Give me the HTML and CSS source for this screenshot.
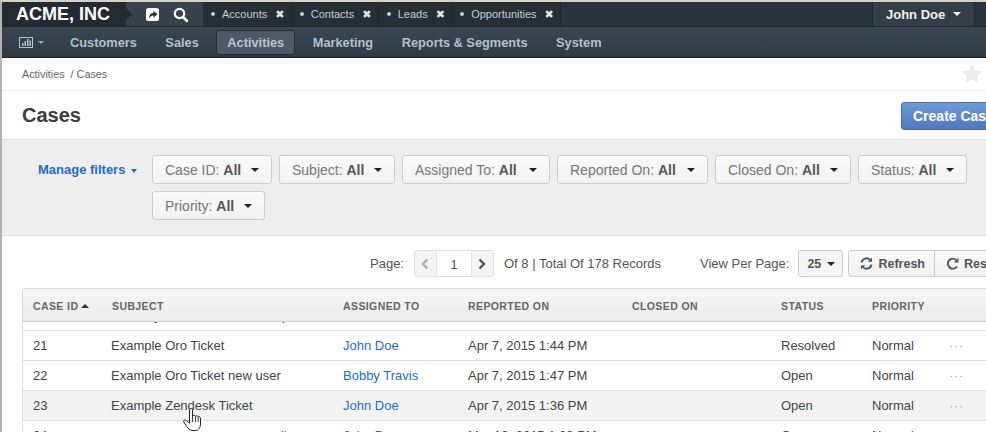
FILE: index.html
```html
<!DOCTYPE html>
<html lang="en">
<head>
<meta charset="utf-8">
<title>Cases</title>
<link rel="stylesheet" href="styles.css">
</head>
<body>
<div class="page">
  <header class="topbar">
    <div class="brand">ACME, INC</div>
    <div class="quick">
      <svg class="ico-share" width="13" height="13" viewBox="0 0 13 13"><rect x="0" y="0" width="13" height="13" rx="2.500" fill="#fff"/><path d="M3 10.500c0-4 2-5.500 4.500-5.500V2.800L11.500 6.300 7.500 9.800V7.500c-2 0-3.400 1-4.500 3z" fill="#2b343d"/></svg>
      <svg class="ico-search" width="15" height="15" viewBox="0 0 15 15"><circle cx="6.500" cy="6.500" r="4.700" fill="none" stroke="#fff" stroke-width="2.200"/><path d="M10 10l4 4" stroke="#fff" stroke-width="2.600" stroke-linecap="round"/></svg>
    </div>
    <ul class="tabs">
      <li class="tab"><span class="dot"></span>Accounts<span class="x">&#10006;</span></li>
      <li class="tab"><span class="dot"></span>Contacts<span class="x">&#10006;</span></li>
      <li class="tab"><span class="dot"></span>Leads<span class="x">&#10006;</span></li>
      <li class="tab"><span class="dot"></span>Opportunities<span class="x">&#10006;</span></li>
    </ul>
    <div class="user">John Doe<span class="caret caret-white"></span></div>
  </header>
  <nav class="mainnav">
    <div class="chart">
      <svg width="14" height="11" viewBox="0 0 14 11"><rect x=".5" y=".5" width="13" height="10" fill="none" stroke="#b5c2cc"/><path d="M3 9V6h1.500v3zM5.500 9V4H7v5zM8 9V2h1.500v7zM10.500 9V3.500H12V9z" fill="#b5c2cc"/></svg>
      <span class="caret caret-nav"></span>
    </div>
    <a class="nav-item">Customers</a>
    <a class="nav-item">Sales</a>
    <a class="nav-item active">Activities</a>
    <a class="nav-item">Marketing</a>
    <a class="nav-item">Reports &amp; Segments</a>
    <a class="nav-item">System</a>
  </nav>
  <div class="crumbs">
    <span>Activities&nbsp; / Cases</span>
    <svg class="star" width="20" height="19" viewBox="0 0 20 19"><path d="M10 0l3 6.300 7 1-5 4.900 1.200 6.800-6.200-3.300L3.800 19 5 12.200 0 7.300l7-1z" fill="#ebebeb"/></svg>
  </div>
  <div class="titlebar">
    <h1>Cases</h1>
    <button class="create">Create Case</button>
  </div>
  <section class="filters">
    <a class="manage">Manage filters<span class="caret caret-blue"></span></a>
    <div class="chips">
      <div class="chip w-id">Case ID: <b>All</b><span class="caret"></span></div>
      <div class="chip w-subject">Subject: <b>All</b><span class="caret"></span></div>
      <div class="chip w-assigned">Assigned To: <b>All</b><span class="caret"></span></div>
      <div class="chip w-reported">Reported On: <b>All</b><span class="caret"></span></div>
      <div class="chip w-closed">Closed On: <b>All</b><span class="caret"></span></div>
      <div class="chip w-status">Status: <b>All</b><span class="caret"></span></div>
      <div class="chip w-priority">Priority: <b>All</b><span class="caret"></span></div>
    </div>
  </section>
  <section class="pager">
    <span class="label">Page:</span>
    <div class="stepper">
      <span class="step"><svg width="8" height="12" viewBox="0 0 8 12"><path d="M6.500 1.500L2 6l4.500 4.500" fill="none" stroke="#aaa" stroke-width="2.400"/></svg></span>
      <span class="num">1</span>
      <span class="step"><svg width="8" height="12" viewBox="0 0 8 12"><path d="M1.500 1.500L6 6l-4.500 4.500" fill="none" stroke="#555" stroke-width="2.400"/></svg></span>
    </div>
    <span class="total">Of 8 | Total Of 178 Records</span>
    <span class="label perpage">View Per Page:</span>
    <div class="size">25<span class="caret"></span></div>
    <div class="actions">
      <span class="action"><svg width="13" height="13" viewBox="0 0 13 13"><path d="M1.500 5.500A5 5 0 0 1 10 2.800M11.500 7.500A5 5 0 0 1 3 10.200" fill="none" stroke="#555" stroke-width="1.800"/><path d="M12 .5v4.300H7.700zM1 12.500V8.200h4.300z" fill="#555"/></svg>Refresh</span>
      <span class="action"><svg width="13" height="13" viewBox="0 0 13 13"><path d="M11 9.500A5 5 0 1 1 10.300 3" fill="none" stroke="#555" stroke-width="1.900"/><path d="M12.500 .8v4.700H7.800z" fill="#555"/></svg>Reset</span>
    </div>
  </section>
  <section class="grid">
    <div class="row head">
      <span class="c1">CASE ID<span class="caret caret-up"></span></span><span class="c2">SUBJECT</span><span class="c3">ASSIGNED TO</span><span class="c4">REPORTED ON</span><span class="c5">CLOSED ON</span><span class="c6">STATUS</span><span class="c7">PRIORITY</span>
    </div>
    <div class="body">
      <div class="row first"><span class="c1">20</span><span class="c2">Tuesday Oro, Zendesk to, help</span><span class="c3"><a>John Doe</a></span><span class="c4">Mar 19, 2015 1:40 AM</span><span class="c5"></span><span class="c6">Resolved</span><span class="c7">Normal</span><span class="c8">&middot;&middot;&middot;</span></div>
      <div class="row"><span class="c1">21</span><span class="c2">Example Oro Ticket</span><span class="c3"><a>John Doe</a></span><span class="c4">Apr 7, 2015 1:44 PM</span><span class="c5"></span><span class="c6">Resolved</span><span class="c7">Normal</span><span class="c8">&middot;&middot;&middot;</span></div>
      <div class="row"><span class="c1">22</span><span class="c2">Example Oro Ticket new user</span><span class="c3"><a>Bobby Travis</a></span><span class="c4">Apr 7, 2015 1:47 PM</span><span class="c5"></span><span class="c6">Open</span><span class="c7">Normal</span><span class="c8">&middot;&middot;&middot;</span></div>
      <div class="row hover"><span class="c1">23</span><span class="c2">Example Zendesk Ticket</span><span class="c3"><a>John Doe</a></span><span class="c4">Apr 7, 2015 1:36 PM</span><span class="c5"></span><span class="c6">Open</span><span class="c7">Normal</span><span class="c8">&middot;&middot;&middot;</span></div>
      <div class="row"><span class="c1">24</span><span class="c2">new oro error as common mail</span><span class="c3"><a>John Doe</a></span><span class="c4">Mar 19, 2015 1:23 PM</span><span class="c5"></span><span class="c6">Open</span><span class="c7">Normal</span><span class="c8">&middot;&middot;&middot;</span></div>
    </div>
    <svg class="cursor" width="19" height="23" viewBox="0 0 19 23"><path d="M6.500 2c0-2 3-2 3 0v6c1-1 2.500-.8 3 .3.800-.8 2.300-.5 2.700.5.800-.5 2.300 0 2.300 1.500V16c0 3-2 6.500-4.500 6.500H9C6.500 22.500 5 20 3 17.500L.8 14c-.8-1.500 1-2.800 2.400-1.500L6.500 15z" fill="#fff" stroke="#222"/><path d="M9.500 8v6M12.500 8.500V14M15.200 9v5" fill="none" stroke="#222" stroke-width=".9"/></svg>
  </section>
</div>
</body>
</html>
```
FILE: styles.css
```css
* { box-sizing: border-box; }
html, body { margin: 0; padding: 0; }
body { width: 986px; height: 432px; overflow: hidden; background: #fff; font-family: "Liberation Sans", Arial, sans-serif; font-size: 13px; color: #444; }
.page { height: 432px; overflow: hidden; border-top: 2px solid #d6d2c8; border-left: 2px solid #b4b4ae; display: flex; flex-direction: column; }

.topbar { height: 25px; flex: none; display: flex; background: #2b343c; border-bottom: 1px solid #1f262c; }
.brand { width: 124px; padding-left: 14px; color: #fff; font-size: 18px; font-weight: bold; line-height: 24px; background: #232a32; position: relative; white-space: nowrap; }
.brand::after { content: ""; position: absolute; left: 118px; top: 0; border-left: 12px solid #232a32; border-top: 12px solid transparent; border-bottom: 12px solid transparent; }
.quick { width: 77px; display: flex; align-items: center; gap: 14px; padding-left: 20px; background: #36434e; }
.ico-share, .ico-search { flex: none; }
.tabs { list-style: none; margin: 0; padding: 0; display: flex; }
.tab { display: flex; align-items: center; height: 24px; padding: 0 5.500px 0 8px; border-right: 1px solid #1f262c; color: #c4ced6; font-size: 11px; background: #262e36; }
.dot { width: 4px; height: 4px; border-radius: 50%; background: #c4ced6; margin-right: 7px; flex: none; }
.x { margin-left: 8px; font-size: 11px; color: #e0e5ea; width: 10px; font-family: "DejaVu Sans", sans-serif; }
.user { margin-left: auto; margin-right: 11px; width: 103px; height: 24px; border-left: 1px solid #1f262c; border-right: 1px solid #1f262c; background: #333e48; color: #eef1f3; font-size: 13px; font-weight: bold; display: flex; align-items: center; padding-left: 13px; }

.caret { display: inline-block; width: 0; height: 0; border-left: 4px solid transparent; border-right: 4px solid transparent; border-top: 4px solid #222; margin-left: 8px; flex: none; }
.caret-white { border-top-color: #fff; }
.caret-nav { border-top-color: #9aa8b3; border-left-width: 3px; border-right-width: 3px; border-top-width: 3px; margin-left: 5px; }
.caret-blue { border-top-color: #1a6ed0; border-left-width: 3.500px; border-right-width: 3.500px; margin-left: 6px; vertical-align: 1px; }
.caret-up { border-top: 0; border-bottom: 4px solid #333; margin-left: 3px; vertical-align: 2px; }

.mainnav { height: 31px; flex: none; display: flex; align-items: center; background: linear-gradient(#3a4751, #2f3b45); border-bottom: 1px solid #1c2329; }
.chart { width: 57px; padding-left: 17px; display: flex; align-items: center; }
.nav-item { color: #b0c0cc; font-size: 12.800px; font-weight: bold; height: 25px; line-height: 24px; padding: 0 10px; margin-right: 6.500px; border-radius: 3px; border: 1px solid transparent; white-space: nowrap; }
.nav-item.active { background: #4d5a65; border-color: #252d34; color: #b5c4d0; }

.crumbs { height: 33px; flex: none; display: flex; align-items: center; justify-content: space-between; padding: 0 2px 0 20px; border-bottom: 1px solid #eee; font-size: 10.800px; color: #666; }
.star { margin-top: -2px; margin-right: 2px; }

.titlebar { height: 49px; flex: none; display: flex; align-items: center; justify-content: space-between; padding-left: 20px; border-bottom: 1px solid #ddd; overflow: hidden; }
h1 { margin: 0; font-size: 20px; font-weight: bold; color: #3c3c3c; }
.create { flex: none; width: 100px; height: 28px; margin-right: -15px; margin-top: 1px; border: 1px solid #4a6ea8; border-radius: 3px; background: linear-gradient(#6f9ad8, #4f79bb); color: #fff; font: bold 14px "Liberation Sans", Arial, sans-serif; text-align: left; padding: 0 0 0 11px; white-space: nowrap; overflow: hidden; }

.filters { height: 96px; flex: none; display: flex; align-items: flex-start; background: #eeeeee; border-bottom: 1px solid #ddd; padding: 15px 0 0 36px; }
.manage { width: 114px; color: #1a6ed0; font-weight: bold; font-size: 13px; line-height: 30px; white-space: nowrap; }
.chips { width: 830px; display: flex; flex-wrap: wrap; gap: 7px; }
.chip { height: 29px; padding: 0 12px; display: flex; align-items: center; background: linear-gradient(#fafafa, #f2f2f2); border: 1px solid #ccc; border-radius: 3px; font-size: 14px; color: #777; white-space: pre; }
.chip b { color: #555; }
.chip .caret { margin-left: auto; }
.w-id { width: 120px; }
.w-subject { width: 116px; }
.w-assigned { width: 148px; }
.w-reported { width: 151px; }
.w-closed { width: 136px; }
.w-status { width: 109px; }
.w-priority { width: 113px; }

.pager { height: 52px; flex: none; display: flex; align-items: center; padding: 3px 0 0 368px; white-space: nowrap; font-size: 13px; }
.pager > * { flex: none; }
.label { color: #555; }
.stepper { display: flex; height: 27px; width: 80px; margin-left: 10px; border: 1px solid #ddd; border-radius: 3px; background: #f4f4f4; }
.step { width: 21px; display: flex; align-items: center; justify-content: center; flex: none; }
.num { flex: 1; background: #fff; border: 1px solid #e6e6e6; border-width: 0 1px; text-align: center; line-height: 28px; font-size: 13.500px; color: #555; }
.total { margin-left: 10px; color: #555; }
.perpage { margin-left: 39px; }
.size { margin-left: 9px; width: 45px; height: 27px; padding-left: 8px; display: flex; align-items: center; border: 1px solid #ccc; border-radius: 3px; background: #f5f5f5; font-size: 12.500px; font-weight: bold; color: #555; }
.size .caret { margin-left: 6px; }
.actions { display: flex; margin-left: 5px; height: 27px; border: 1px solid #ccc; border-radius: 3px; background: linear-gradient(#fafafa, #f0f0f0); }
.action { display: flex; align-items: center; gap: 5px; padding: 0 9px 0 11px; font-weight: bold; color: #555; font-size: 12.500px; }
.action + .action { border-left: 1px solid #ccc; }

.grid { flex: 1; min-height: 0; margin-left: 20px; border: 1px solid #ddd; border-right: 0; border-bottom: 0; border-radius: 3px 0 0 0; position: relative; overflow: hidden; }
.row { position: relative; height: 30px; display: flex; align-items: center; padding-bottom: 1px; border-bottom: 1px solid #ddd; font-size: 13px; color: #444; white-space: nowrap; }
.row > span { flex: none; }
.head { height: 33px; padding: 1px 0 0; background: linear-gradient(#f6f6f6, #ebebeb); font-weight: bold; font-size: 10.500px; letter-spacing: .4px; color: #666; border-bottom: 1px solid #ccc; }
.body { height: 140px; overflow: hidden; }
.body .c2 { text-indent: -1px; }
.first { margin-top: -21px; }
.hover { background: #f3f3f3; }
.c1 { width: 89px; padding-left: 10px; }
.c2 { width: 231px; }
.c3 { width: 125px; }
.c4 { width: 164px; }
.c5 { width: 149px; }
.c6 { width: 91px; }
.c7 { width: 77px; }
.c8 { color: #aaa; letter-spacing: .5px; }
a { color: #1a6ed0; }
.cursor { position: absolute; left: 160px; top: 119px; }
```
